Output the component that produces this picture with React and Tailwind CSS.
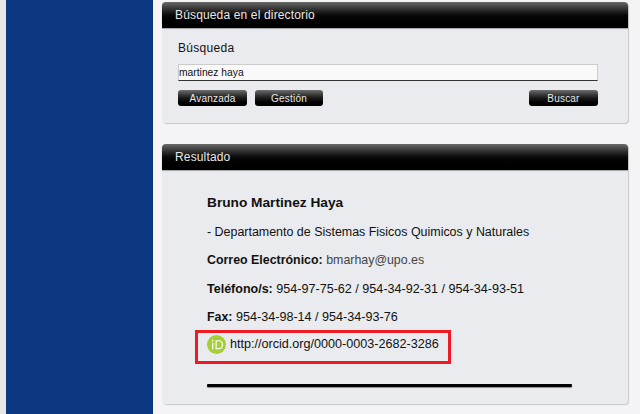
const PanelHeader = ({ title }) => (
  <div className="h-[26px] rounded-t-[4px] bg-gradient-to-b from-[#6a6a6a] via-[#0a0a0a] to-black pl-[13px] text-[12px] leading-[27px] tracking-[0.15px] text-[#e8e8e8] shadow-[0_1px_1px_rgba(0,0,0,0.3)]">
    {title}
  </div>
);

const DarkButton = ({ label, width }) => (
  <button className={`h-[16px] ${width} rounded-[3px] bg-gradient-to-b from-[#6e6e6e] via-[#1a1a1a] to-black text-center text-[10px] leading-[15px] tracking-[0.2px] text-[#e8e8e8]`}>
    {label}
  </button>
);

const Row = ({ children }) => (
  <p className="h-[28.5px] text-[12.6px] leading-[30px] text-[#111]">{children}</p>
);

const OrcidIcon = () => (
  <svg viewBox="0 0 20 20" className="h-[19px] w-[19px] shrink-0">
    <circle cx="10" cy="10" r="10" fill="#a6ce39" />
    <rect x="5.4" y="8" width="1.3" height="7" fill="#fff" />
    <circle cx="6" cy="5.8" r="0.9" fill="#fff" />
    <path d="M9 5.5h3.2a4.75 4.75 0 0 1 0 9.5H9zM10.2 6.7v7.1h1.9a3.55 3.55 0 0 0 0-7.1z" fill="#fff" fillRule="evenodd" />
  </svg>
);

export default function App() {
  return (
    <div className="flex h-[414px] w-[640px] overflow-hidden bg-[#f4f4f6] font-['Liberation_Sans',Arial,sans-serif]">
      <div className="w-[6px] shrink-0 bg-[#e6e6e6]" />
      <div className="w-[147px] shrink-0 bg-[#0a3780]" />

      <main className="ml-[9px] w-[466px] shrink-0 pt-[2px]">
        <section className="h-[121px] rounded-[4px] bg-[#e9ebee] shadow-[1px_1px_1px_rgba(0,0,0,0.18)]">
          <PanelHeader title="Búsqueda en el directorio" />
          <div className="pl-[16px] pr-[30px]">
            <h2 className="mt-[12px] text-[12px] leading-[16px] tracking-[0.3px] text-[#111]">Búsqueda</h2>
            <div className="mt-[8px] h-[17px] border border-[#ccc] border-b-[#333] bg-[#f9f9fa] text-[10.3px] leading-[15px] text-[#111]">
              martinez haya
            </div>
            <div className="mt-[9px] flex gap-[8px]">
              <DarkButton label="Avanzada" width="w-[69px]" />
              <DarkButton label="Gestión" width="w-[68px]" />
              <div className="flex-1" />
              <DarkButton label="Buscar" width="w-[69px]" />
            </div>
          </div>
        </section>

        <section className="relative mt-[21px] h-[260px] rounded-[4px] bg-[#e9ebee] shadow-[1px_1px_1px_rgba(0,0,0,0.18)]">
          <PanelHeader title="Resultado" />
          <div className="pl-[45px] pr-[56px] pt-[18px]">
            <Row><b className="text-[13.7px]">Bruno Martinez Haya</b></Row>
            <Row><span className="text-[12.45px]">- Departamento de Sistemas Fisicos Quimicos y Naturales</span></Row>
            <Row>
              <b className="text-[12.4px]">Correo Electrónico:</b> <span className="text-[12.4px] text-[#444]">bmarhay@upo.es</span>
            </Row>
            <Row>
              <b className="text-[12.5px]">Teléfono/s:</b> 954-97-75-62 / 954-34-92-31 / 954-34-93-51
            </Row>
            <Row>
              <b className="text-[12.4px]">Fax:</b> 954-34-98-14 / 954-34-93-76
            </Row>
            <div className="flex h-[28px] items-center gap-[4px] text-[12.6px] text-[#111]">
              <OrcidIcon />
              <span>http://orcid.org/0000-0003-2682-3286</span>
            </div>
            <div className="mt-[25px] h-[3px] rounded-[1px] bg-black shadow-[0_1px_1px_rgba(0,0,0,0.4)]" />
          </div>
          {/* red annotation over the ORCID row */}
          <div className="absolute left-[33px] top-[186px] h-[34px] w-[256px] border-[3px] border-[#ed1c24]" />
        </section>
      </main>
    </div>
  );
}
